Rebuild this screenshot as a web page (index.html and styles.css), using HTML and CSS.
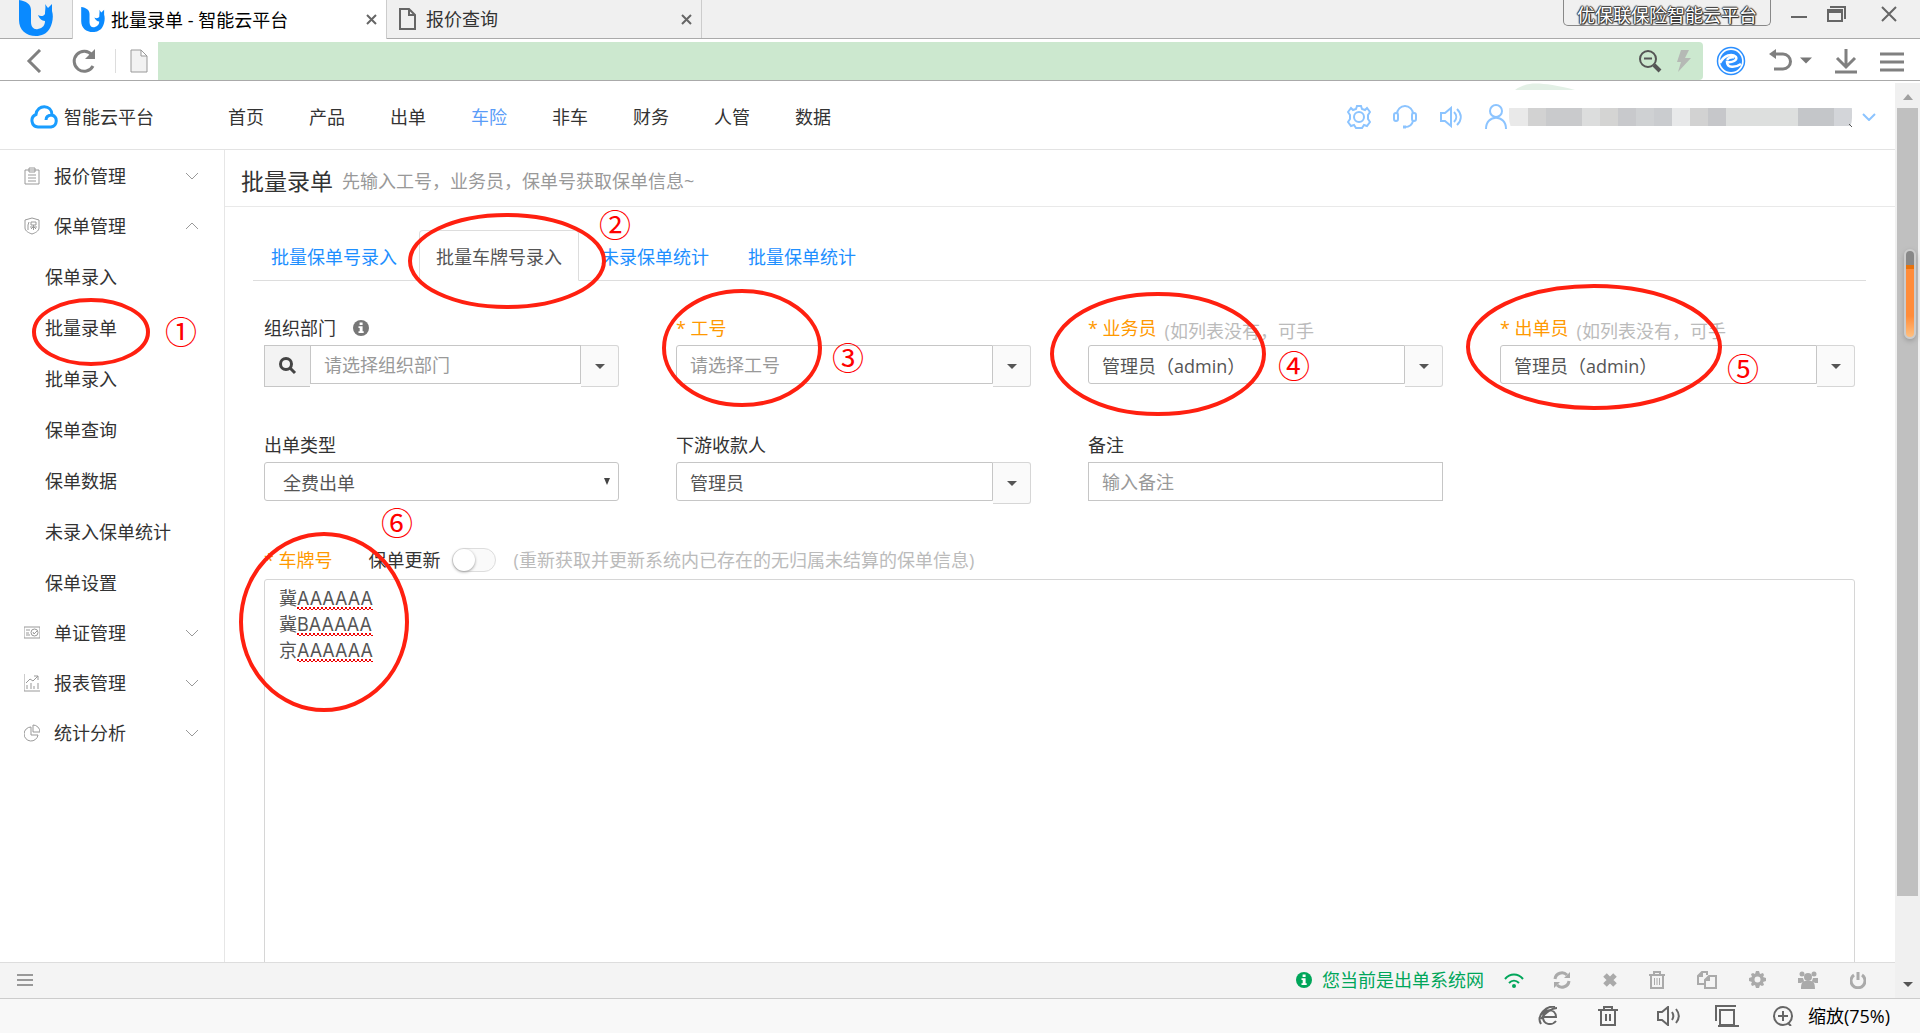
FILE: index.html
```html
<!DOCTYPE html>
<html lang="zh-CN">
<head>
  <meta charset="UTF-8">
  <meta name="viewport" content="width=device-width, initial-scale=1.0">
  <link rel="stylesheet" href="styles.css">
  <title>批量录单 - 智能云平台</title>
</head>
<body>
  <!-- shared shapes -->
  <svg class="defs" width="0" height="0">
    <symbol id="logo" viewBox="0 0 34 36">
      <path d="M0 0C7 1 12 4 12 10V22C12 27 15 30 19 29C24 28 26 25 26 21C23 21 20 18 19 15C22 17 25 16 26 14C26 10 27 7 26 4L29 8L33 4V11C35 17 33 24 31 28C28 34 22 36 17 36C7 36 0 30 0 20Z"/>
    </symbol>
    <symbol id="down" viewBox="0 0 14 8"><path d="M1 1L7 7L13 1"/></symbol>
    <symbol id="up" viewBox="0 0 14 8"><path d="M1 7L7 1L13 7"/></symbol>
    <symbol id="info" viewBox="0 0 16 16">
      <circle cx="8" cy="8" r="8"/>
      <path fill="#fff" d="M6.600 2.500H9.600V5H6.600ZM5.500 6.300H9.600V11.300H10.700V13H5.500V11.300H6.700V8H5.500Z"/>
    </symbol>
    <symbol id="caret" viewBox="0 0 10 5"><path d="M0 0H10L5 5Z"/></symbol>
  </svg>

  <div class="titlebar">
    <div class="app-logo"><svg class="blue" width="34" height="36"><use href="#logo"/></svg></div>
    <div class="win-tab active">
      <svg class="blue" width="24" height="25"><use href="#logo"/></svg>
      <span>批量录单 - 智能云平台</span>
      <button class="tab-close" aria-label="关闭"><svg class="line" width="11" height="11"><path d="M1 1L10 10M10 1L1 10"/></svg></button>
    </div>
    <div class="win-tab">
      <svg class="line" width="17" height="22"><path d="M1 1H10L16 7V21H1ZM10 1V7H16"/></svg>
      <span>报价查询</span>
      <button class="tab-close" aria-label="关闭"><svg class="line" width="11" height="11"><path d="M1 1L10 10M10 1L1 10"/></svg></button>
    </div>
    <div class="win-right">
      <span class="badge">优保联保险智能云平台</span>
      <button aria-label="最小化"><svg class="line" width="16" height="16"><path d="M0 11H16"/></svg></button>
      <button aria-label="还原"><svg class="line" width="20" height="16"><path d="M1 4H15V15H1ZM1 6H15M3 1H18V13"/></svg></button>
      <button aria-label="关闭窗口"><svg class="line" width="16" height="16"><path d="M1 1L15 15M15 1L1 15"/></svg></button>
    </div>
  </div>

  <div class="toolbar">
    <button class="back" aria-label="后退"><svg class="thick" width="16" height="24"><path d="M14 1L3 12L14 23"/></svg></button>
    <button class="reload" aria-label="刷新"><svg class="thick" width="26" height="26"><path d="M22 18A10 10 0 1 1 21 7"/><path class="solid" d="M24 1V11H14Z"/></svg></button>
    <span class="page-icon"><svg width="18" height="24"><path fill="#f2f2f2" stroke="#999" d="M1 1H11L17 7V23H1ZM11 1V7H17"/></svg></span>
    <div class="address">
      <svg width="24" height="24" fill="none" stroke="#555" stroke-width="2"><circle cx="10" cy="10" r="8"/><path d="M6 9.500H14"/><path stroke-width="4" d="M16 16L22 22"/></svg>
      <svg width="16" height="24" fill="#b5b9b5"><path d="M5 1H13L9 9H15L2 23L5 13H1Z"/></svg>
    </div>
    <div class="tools">
      <button aria-label="浏览器模式"><svg width="30" height="30"><circle cx="15" cy="15" r="13.500" fill="#fff" stroke="#2b8fff" stroke-width="1.500"/><circle cx="15" cy="15" r="11" fill="#2b8fff"/><path fill="none" stroke="#fff" stroke-width="2.500" d="M4 17C8 9 16 7 20 11C22 14 16 17 11 16C11 22 19 22 25 18M11 14C13 11 17 11 17 12.500"/></svg></button>
      <button class="undo" aria-label="撤销"><svg class="thick" width="24" height="24"><path d="M5 5H15A7 7 0 0 1 15 20H6"/><path class="solid" d="M8 0V10L1 5Z"/></svg><svg width="12" height="7" fill="#777"><use href="#caret"/></svg></button>
      <button aria-label="下载"><svg class="thick" width="24" height="26"><path d="M12 1V19M3 10L12 19L21 10M1 24H23"/></svg></button>
      <button aria-label="菜单"><svg class="thick" width="24" height="24"><path d="M0 5H24M0 13H24M0 21H24"/></svg></button>
    </div>
  </div>

  <div class="viewport">
    <div class="app">
      <header class="header">
        <a class="brand" href="#"><svg width="29" height="24"><path fill="none" stroke="#1a9dff" stroke-width="3" d="M8 22A6.500 6.500 0 0 1 6 9.500C7 -1 22 -1 22 10A6.200 6.200 0 0 1 21 22ZM22 10C18 10 16 12 16 15"/></svg>智能云平台</a>
        <nav class="nav">
          <a href="#">首页</a><a href="#">产品</a><a href="#">出单</a><a class="current" href="#">车险</a>
          <a href="#">非车</a><a href="#">财务</a><a href="#">人管</a><a href="#">数据</a>
        </nav>
        <div class="user">
          <svg class="sky" width="24" height="24"><path d="M10 1H14L15 4L18 5L20 3L23 7L21 10V14L23 17L20 21L17 20L15 23H9L7 20L4 21L1 17L3 14V10L1 7L4 3L6 5L9 4Z"/><circle cx="12" cy="12" r="5"/></svg>
          <svg class="sky" width="24" height="24"><path d="M4 9A8 8 0 0 1 20 9M20 16C19 20 16 22 12 22"/><rect x="1" y="8" width="4" height="8" rx="2"/><rect x="19" y="8" width="4" height="8" rx="2"/><path stroke-width="3" d="M10 22H13"/></svg>
          <svg class="sky" width="24" height="22"><path d="M2 7H6L12 2V20L6 15H2ZM15 6C18 9 18 13 15 16M18 3C23 8 23 14 18 19"/></svg>
          <svg class="sky" width="22" height="25"><circle cx="11" cy="7" r="6"/><path d="M1 25C1 10 21 10 21 25"/></svg>
          <svg class="mosaic" width="344" height="68">
            <path fill="#e3f0e6" d="M6 9C16 1 30 0 66 9Z"/>
            <clipPath id="name"><rect x="0" y="9" width="343" height="48" rx="20"/></clipPath>
            <g clip-path="url(#name)">
              <rect x="0" y="27" width="19" height="18" fill="#e9e9e9"/>
              <rect x="19" y="27" width="18" height="18" fill="#d2d2d2"/>
              <rect x="37" y="27" width="36" height="18" fill="#c9cacc"/>
              <rect x="73" y="27" width="18" height="18" fill="#dcdddd"/>
              <rect x="91" y="27" width="18" height="18" fill="#d4d4d3"/>
              <rect x="109" y="27" width="18" height="18" fill="#c8c9cc"/>
              <rect x="127" y="27" width="18" height="18" fill="#cfd1d3"/>
              <rect x="145" y="27" width="18" height="18" fill="#cacccf"/>
              <rect x="163" y="27" width="18" height="18" fill="#e8e9ea"/>
              <rect x="181" y="27" width="18" height="18" fill="#d2d2d2"/>
              <rect x="199" y="27" width="18" height="18" fill="#c6c7ca"/>
              <rect x="217" y="27" width="72" height="18" fill="#dddfde"/>
              <rect x="289" y="27" width="36" height="18" fill="#c4c6c9"/>
              <rect x="325" y="27" width="18" height="18" fill="#d3d5d9"/>
            </g>
            <path stroke="#555" d="M340 43L343 46"/>
          </svg>
          <svg class="sky thin" width="14" height="8"><use href="#down"/></svg>
        </div>
      </header>

      <div class="body">
        <aside class="sidebar">
          <a class="group" href="#"><svg width="16" height="18"><path d="M1 3H15V17H1ZM5 1H11V5H5ZM4 8H12M4 11H12M4 14H12"/></svg>报价管理<svg class="arrow" width="14" height="8"><use href="#down"/></svg></a>
          <a class="group" href="#"><svg width="16" height="18"><path d="M1 3L8 1L15 3V11C15 14 11 16 8 17C5 16 1 14 1 11ZM5 5L4 8V13M7 5H12V8H7ZM9.500 8V13M6 10H13M9 10L7 12M10 10L12 12"/></svg>保单管理<svg class="arrow" width="14" height="8"><use href="#up"/></svg></a>
          <div class="submenu">
            <a href="#">保单录入</a>
            <a href="#">批量录单</a>
            <a href="#">批单录入</a>
            <a href="#">保单查询</a>
            <a href="#">保单数据</a>
            <a href="#">未录入保单统计</a>
            <a href="#">保单设置</a>
          </div>
          <a class="group" href="#"><svg width="16" height="18"><path d="M0 3H16V14H0ZM2 6H6M2 9H5M2 11H6"/><circle cx="10.500" cy="8.500" r="3.500"/><path d="M9 8L10 10L13 7"/></svg>单证管理<svg class="arrow" width="14" height="8"><use href="#down"/></svg></a>
          <a class="group" href="#"><svg width="16" height="18"><path d="M0 0V17H16M3 15V11M7 15V9M10 15V12M14 15V9M2 9L6 5L9 7L14 2M10 2H14V6"/></svg>报表管理<svg class="arrow" width="14" height="8"><use href="#down"/></svg></a>
          <a class="group" href="#"><svg width="16" height="18"><path d="M7 3A7 7 0 1 0 14 11H7ZM9 1V8H16A7 7 0 0 0 9 1"/></svg>统计分析<svg class="arrow" width="14" height="8"><use href="#down"/></svg></a>
        </aside>

        <main class="main">
          <div class="page-head"><h1>批量录单</h1><span>先输入工号，业务员，保单号获取保单信息~</span></div>
          <div class="content">
            <nav class="tabs">
              <a href="#">批量保单号录入</a>
              <a class="active" href="#">批量车牌号录入</a>
              <a href="#">未录保单统计</a>
              <a href="#">批量保单统计</a>
            </nav>
            <form class="form">
              <div class="grid">
                <div class="field">
                  <div class="label"><label for="dept">组织部门</label><svg class="tip" width="16" height="16"><use href="#info"/></svg></div>
                  <div class="combo with-search">
                    <button type="button" class="search" aria-label="搜索"><svg width="18" height="18"><circle cx="7" cy="7" r="5.500"/><path d="M11 11L16 16"/></svg></button>
                    <input id="dept" type="text" placeholder="请选择组织部门">
                    <button type="button" class="drop" aria-label="展开"><svg width="10" height="5"><use href="#caret"/></svg></button>
                  </div>
                </div>
                <div class="field">
                  <div class="label required"><label for="jobno">* 工号</label></div>
                  <div class="combo">
                    <input id="jobno" type="text" placeholder="请选择工号">
                    <button type="button" class="drop" aria-label="展开"><svg width="10" height="5"><use href="#caret"/></svg></button>
                  </div>
                </div>
                <div class="field">
                  <div class="label required"><label for="sales">* 业务员</label><span class="hint">(如列表没有，可手</span></div>
                  <div class="combo">
                    <input id="sales" type="text" value="管理员（admin）">
                    <button type="button" class="drop" aria-label="展开"><svg width="10" height="5"><use href="#caret"/></svg></button>
                  </div>
                </div>
                <div class="field">
                  <div class="label required"><label for="issuer">* 出单员</label><span class="hint">(如列表没有，可手</span></div>
                  <div class="combo">
                    <input id="issuer" type="text" value="管理员（admin）">
                    <button type="button" class="drop" aria-label="展开"><svg width="10" height="5"><use href="#caret"/></svg></button>
                  </div>
                </div>
                <div class="field">
                  <div class="label"><label for="type">出单类型</label></div>
                  <div class="select">
                    <select id="type"><option>全费出单</option></select>
                    <svg width="6" height="7"><path d="M0 0H6L3 7Z"/></svg>
                  </div>
                </div>
                <div class="field">
                  <div class="label"><label for="payee">下游收款人</label></div>
                  <div class="combo">
                    <input id="payee" type="text" value="管理员">
                    <button type="button" class="drop" aria-label="展开"><svg width="10" height="5"><use href="#caret"/></svg></button>
                  </div>
                </div>
                <div class="field">
                  <div class="label"><label for="remark">备注</label></div>
                  <div class="combo"><input id="remark" class="square" type="text" placeholder="输入备注"></div>
                </div>
              </div>
              <div class="plate-head">
                <label class="required" for="plates">* 车牌号</label>
                <label class="update" for="update">保单更新</label>
                <input id="update" class="switch" type="checkbox">
                <span class="hint">(重新获取并更新系统内已存在的无归属未结算的保单信息)</span>
              </div>
              <div class="plates">
                <textarea id="plates" spellcheck="false">冀AAAAAA
冀BAAAAA
京AAAAAA</textarea>
                <i class="squiggle"></i><i class="squiggle"></i><i class="squiggle"></i>
              </div>
            </form>
          </div>
        </main>
      </div>

      <footer class="footer">
        <svg class="menu" width="16" height="12"><path d="M0 1H16M0 6H16M0 11H16"/></svg>
        <div class="net"><svg width="16" height="16"><use href="#info"/></svg><span>您当前是出单系统网</span></div>
        <div class="actions">
          <svg class="wifi" width="20" height="16"><path d="M1 7C6 1 14 1 19 7M5 11C8 8 12 8 15 11"/><circle cx="10" cy="14" r="1"/></svg>
          <svg width="18" height="18"><path class="stroke" d="M2 8A7 7 0 0 1 14 4M16 10A7 7 0 0 1 4 14"/><path d="M17 1V7H11ZM1 17V11H7Z"/></svg>
          <svg width="14" height="14"><path class="stroke bold" d="M2 2L12 12M12 2L2 12"/></svg>
          <svg width="16" height="18"><path class="stroke thin" d="M0 4H16M5 4V1H11V4M2 4V17H14V4"/><path class="stroke hair" d="M5.500 7V14M8 7V14M10.500 7V14"/></svg>
          <svg width="20" height="18"><path class="stroke thin" d="M10 4V1H5L1 5V13H8M5 1V5H1M12 5H19V17H8V9ZM12 5V9H8"/></svg>
          <svg width="17" height="17"><path fill-rule="evenodd" d="M7 0H10L11 3L14 2L15 4L14 6L17 7V10L14 11L15 14L13 15L11 14L10 17H7L6 14L3 15L2 13L3 11L0 10V7L3 6L2 3L4 2L6 3ZM8.500 5.500A3 3 0 1 0 8.500 11.500A3 3 0 1 0 8.500 5.500Z"/></svg>
          <svg width="20" height="18"><circle cx="4" cy="3" r="2.500"/><circle cx="16" cy="3" r="2.500"/><circle cx="10" cy="6" r="4"/><path d="M0 7H5L6 10L3 12H0ZM20 7H15L14 10L17 12H20ZM3 18C3 13 4 10 7 10H13C16 10 17 13 17 18Z"/></svg>
          <svg width="16" height="18"><path class="stroke" d="M4 4A7 7 0 1 0 12 4M8 1V9"/></svg>
        </div>
      </footer>
    </div>
    <div class="scrollbar">
      <svg width="10" height="6"><path fill="#a0a0a0" d="M5 0L10 6H0Z"/></svg>
      <div class="track"><div class="thumb"><i class="gauge"></i></div></div>
      <svg width="10" height="5"><path fill="#555" d="M0 0H10L5 5Z"/></svg>
    </div>
  </div>

  <div class="statusbar">
    <svg width="26" height="20"><path d="M4 11H18C18 2 5 2 5 11C5 19 14 20 18 15M17 1C8 -1 -2 10 3 18M19 2C14 2 7 7 3 13"/></svg>
    <svg width="25" height="20"><path d="M0 4H20M6 4V1H14V4M3 4V19H17V4M8 8V15M12 8V15"/></svg>
    <svg width="24" height="20"><path d="M1 6H5L11 1V19L5 14H1ZM15 6C17 9 17 11 15 14M19 3C23 8 23 12 19 17"/></svg>
    <svg width="24" height="22"><path d="M0 1H21M1 1V16M5 5H19V20H5ZM3 21H24"/></svg>
    <div class="zoom"><svg width="20" height="20"><circle cx="10" cy="10" r="9"/><path d="M5 10H15M10 5V15M15 17L18 20"/></svg><span>缩放(75%)</span></div>
  </div>

  <!-- step marks over the page -->
  <svg class="marks">
    <ellipse cx="91" cy="332" rx="57" ry="32"/><text x="181" y="344">①</text>
    <ellipse cx="507" cy="261" rx="97" ry="46"/><text x="615" y="237">②</text>
    <ellipse cx="742" cy="348" rx="78" ry="57"/><text x="848" y="370">③</text>
    <ellipse cx="1158" cy="354" rx="106" ry="60"/><text x="1294" y="378">④</text>
    <ellipse cx="1594" cy="347" rx="126" ry="61"/><text x="1743" y="381">⑤</text>
    <ellipse cx="324" cy="622" rx="83" ry="88"/><text x="397" y="535">⑥</text>
  </svg>
</body>
</html>
```
FILE: styles.css
```css
* {
  box-sizing: border-box;
}

body {
  margin: 0;
  height: 100vh;
  display: flex;
  flex-direction: column;
  overflow: hidden;
  position: relative;
  background: #fff;
  color: #333;
  font-family: "Open Sans", "Noto Sans CJK SC", sans-serif;
  font-size: 18px;
  line-height: 26px;
}

a {
  color: inherit;
  text-decoration: none;
}

button {
  padding: 0;
  border: none;
  background: none;
  display: flex;
  align-items: center;
}

input, select, textarea {
  font: inherit;
  color: #555;
}

svg {
  flex: none;
  display: block;
}

.defs {
  position: absolute;
}

.blue {
  fill: #0a8aff;
}

.line {
  fill: none;
  stroke: #666;
  stroke-width: 2;
}

.thick {
  fill: none;
  stroke: #808080;
  stroke-width: 3;
}

.thick .solid {
  fill: #808080;
  stroke: none;
}

/* window frame */
.titlebar {
  height: 39px;
  flex: none;
  display: flex;
  background: #f0f0f0;
  border-bottom: 1px solid #aaa;
}

.app-logo {
  width: 72px;
  padding-left: 19px;
}

.win-tab {
  width: 315px;
  height: 38px;
  padding: 0 9px 0 12px;
  display: flex;
  align-items: center;
  gap: 10px;
  border-right: 1px solid #ccc;
}

.win-tab.active {
  height: 39px;
  padding-left: 8px;
  gap: 6px;
  background: #fff;
  border-left: 1px solid #ccc;
  color: #000;
}

.tab-close {
  margin-left: auto;
}

.win-right {
  margin-left: auto;
  padding-right: 23px;
  display: flex;
  align-items: flex-start;
  gap: 20px;
}

.win-right button {
  height: 28px;
  margin-right: 14px;
}

.win-right button:last-child {
  margin-right: 0;
}

.win-right button:nth-child(2) {
  margin-right: 0;
}

.badge {
  height: 26px;
  padding: 2px 13px 0;
  border: 1px solid #888;
  border-top: none;
  border-radius: 0 0 5px 5px;
  color: #fff;
  text-shadow: 1px 0 1px #333, -1px 0 1px #333, 0 1px 1px #333, 0 -1px 1px #333, 1px 1px 1px #333;
}

.toolbar {
  height: 42px;
  flex: none;
  padding-top: 2px;
  display: flex;
  align-items: center;
  border-bottom: 1px solid #aaa;
}

.back {
  width: 71px;
  padding-left: 26px;
}

.page-icon {
  margin-left: 18px;
  padding: 0 10px 0 14px;
  border-left: 1px solid #ddd;
}

.address {
  height: 38px;
  flex: 1;
  padding-right: 11px;
  display: flex;
  align-items: center;
  justify-content: flex-end;
  gap: 14px;
  background: #cce8cf;
  border-radius: 0 4px 4px 0;
}

.tools {
  padding: 0 16px 0 13px;
  display: flex;
  align-items: center;
  gap: 22px;
}

.undo {
  gap: 8px;
}

.viewport {
  flex: 1;
  min-height: 0;
  display: flex;
}

.app {
  flex: 1;
  min-width: 0;
  display: flex;
  flex-direction: column;
}

/* header */
.header {
  height: 69px;
  flex: none;
  display: flex;
  align-items: center;
  border-bottom: 1px solid #e3e3e3;
}

.brand {
  width: 228px;
  padding: 4px 0 0 30px;
  display: flex;
  align-items: center;
  gap: 5px;
}

.nav {
  padding-top: 4px;
  display: flex;
  gap: 45px;
}

.nav .current {
  color: #5a9cf8;
}

.user {
  height: 68px;
  margin-left: auto;
  padding-right: 19px;
  display: flex;
  align-items: center;
  gap: 22px;
}

.sky {
  margin-top: 3px;
  fill: none;
  stroke: #8cc4ff;
  stroke-width: 2;
}

.mosaic {
  margin: 0 -13px 0 -20px;
}

.body {
  flex: 1;
  min-height: 0;
  display: flex;
}

/* sidebar */
.sidebar {
  width: 225px;
  flex: none;
  padding-top: 1px;
  border-right: 1px solid #e6e6e6;
}

.group {
  height: 50px;
  padding: 0 25px 0 24px;
  display: flex;
  align-items: center;
  gap: 14px;
}

.group svg {
  fill: none;
  stroke: #999;
}

.group .arrow {
  margin-left: auto;
}

.submenu a {
  height: 51px;
  padding-left: 45px;
  display: flex;
  align-items: center;
}

/* page */
.main {
  flex: 1;
  min-width: 0;
  overflow: hidden;
}

.page-head {
  height: 57px;
  padding: 6px 16px 0;
  display: flex;
  align-items: center;
  gap: 9px;
  border-bottom: 1px solid #e9e9e9;
  color: #999;
}

.page-head h1 {
  margin: 0;
  color: #333;
  font-size: 23px;
  font-weight: 400;
}

.content {
  padding: 23px 29px 0 28px;
}

.tabs {
  padding-left: 1px;
  display: flex;
  gap: 5px;
  border-bottom: 1px solid #ddd;
}

.tabs a {
  height: 51px;
  margin-bottom: -1px;
  padding: 2px 16px 0;
  display: flex;
  align-items: center;
  border: 1px solid transparent;
  color: #1e8fff;
}

.tabs .active {
  background: #fff;
  border-color: #ddd #ddd #fff;
  border-radius: 4px 4px 0 0;
  color: #555;
}

.form {
  padding: 34px 11px 0;
}

.grid {
  display: grid;
  grid-template-columns: repeat(4, 1fr);
  column-gap: 57px;
}

.field {
  height: 117px;
}

.label {
  height: 30px;
  display: flex;
  white-space: nowrap;
}

.tip {
  margin: 5px 0 0 17px;
  fill: #777;
}

.required {
  color: #f90;
}

.hint {
  color: #bbb;
}

.label .hint {
  margin: 3px 0 0 8px;
}

.combo {
  height: 42px;
  display: flex;
  align-items: flex-start;
}

.combo input {
  flex: 1;
  min-width: 0;
  height: 39px;
  padding: 0 13px;
  border: 1px solid #c6c6c6;
  border-radius: 3px 0 0 3px;
}

.combo input.square,
.with-search input {
  border-radius: 0;
}

.combo input::placeholder {
  color: #999;
  opacity: 1;
}

.drop {
  width: 38px;
  height: 42px;
  justify-content: center;
  border: 1px solid #d6d6d6;
  border-left: none;
  border-radius: 0 3px 3px 0;
  background: #fafafa;
  fill: #555;
}

.search {
  width: 46px;
  height: 42px;
  justify-content: center;
  border: 1px solid #c6c6c6;
  border-right: none;
  background: #f3f3f3;
  fill: none;
  stroke: #444;
  stroke-width: 3;
}

.select {
  position: relative;
}

.select select {
  width: 100%;
  height: 39px;
  padding: 2px 18px 0;
  appearance: none;
  border: 1px solid #c6c6c6;
  border-radius: 3px;
  background: #fff;
}

.select svg {
  position: absolute;
  right: 9px;
  top: 16px;
  fill: #444;
}

.plate-head {
  height: 30px;
  padding-bottom: 8px;
  display: flex;
  align-items: center;
}

.update {
  margin: 0 11px 0 36px;
}

.switch {
  width: 44px;
  height: 24px;
  margin: 0 18px 0 0;
  appearance: none;
  border: 1px solid #ddd;
  border-radius: 12px;
  background: #fafafa;
}

.switch::before {
  content: "";
  display: block;
  width: 22px;
  height: 22px;
  border-radius: 50%;
  background: #fff;
  box-shadow: 0 1px 3px #999;
}

.plates {
  position: relative;
}

.plates textarea {
  display: block;
  width: 100%;
  height: 500px;
  padding: 6px 14px;
  border: 1px solid #d6d6d6;
  border-radius: 3px;
  resize: none;
  font-family: "Inter", "Noto Sans CJK SC", sans-serif;
}

/* spelling marks under the plate numbers */
.squiggle {
  position: absolute;
  left: 33px;
  top: 28px;
  width: 76px;
  height: 3px;
  background:
    repeating-linear-gradient(90deg, #e00 0 2px, transparent 2px 4px) 0 0 / 100% 2px no-repeat,
    repeating-linear-gradient(90deg, transparent 0 2px, #e00 2px 4px) 0 2px / 100% 1px no-repeat;
}

.squiggle:nth-of-type(2) {
  top: 54px;
}

.squiggle:nth-of-type(3) {
  top: 80px;
}

/* bottom bars */
.footer {
  height: 36px;
  flex: none;
  padding: 0 29px 2px 17px;
  display: flex;
  align-items: center;
  background: #f4f4f4;
  border-top: 1px solid #ddd;
}

.menu {
  stroke: #999;
  stroke-width: 2;
}

.net {
  margin-left: auto;
  display: flex;
  align-items: center;
  gap: 10px;
  color: #00a65a;
  fill: #00a65a;
}

.actions {
  margin-left: 20px;
  display: flex;
  align-items: center;
  gap: 32px;
  fill: #aaa;
}

.actions .stroke {
  fill: none;
  stroke: #aaa;
  stroke-width: 3;
}

.actions .bold {
  stroke-width: 5;
}

.actions .thin {
  stroke-width: 2;
}

.actions .hair {
  stroke-width: 1;
}

.actions .wifi {
  stroke: #00a65a;
  stroke-width: 2;
  fill: none;
  margin-right: -3px;
}

.scrollbar {
  width: 25px;
  flex: none;
  margin-top: 2px;
  padding: 11px 0;
  display: flex;
  flex-direction: column;
  align-items: center;
  background: #f0f0f0;
}

.track {
  flex: 1;
  width: 21px;
  padding: 8px 0 86px;
}

.thumb {
  height: 100%;
  padding: 141px 2px 0 7px;
  background: #c0c0c0;
}

.gauge {
  display: block;
  height: 90px;
  border: 2px solid #ccc;
  border-radius: 7px;
  background: linear-gradient(#888 0 14px, #e8720c 14px 18px, #ff8c3a 18px 65px, #ffc080);
  box-shadow: 0 2px 5px #999;
}

.statusbar {
  height: 35px;
  flex: none;
  padding-right: 30px;
  display: flex;
  align-items: center;
  justify-content: flex-end;
  gap: 34px;
  background: #f8f8f8;
  border-top: 1px solid #ccc;
  color: #000;
}

.statusbar svg {
  fill: none;
  stroke: #666;
  stroke-width: 2;
}

.zoom {
  display: flex;
  align-items: center;
  gap: 15px;
}

.marks {
  position: absolute;
  left: 0;
  top: 0;
  width: 100%;
  height: 100%;
  pointer-events: none;
}

.marks ellipse {
  fill: none;
  stroke: #ff2010;
  stroke-width: 4;
}

.marks text {
  fill: #f00;
  font-family: "Noto Sans CJK SC", sans-serif;
  font-size: 32px;
  text-anchor: middle;
}
```
